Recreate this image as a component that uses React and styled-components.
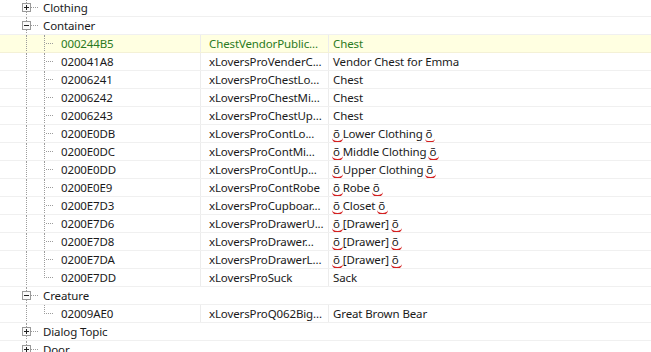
import React from "react";
import styled, { createGlobalStyle } from "styled-components";

const GlobalStyle = createGlobalStyle`
  html, body {
    margin: 0;
    padding: 0;
    background: #ffffff;
  }
  body {
    font-family: "Segoe UI", "Noto Sans", "Liberation Sans", sans-serif;
    font-size: 11.5px;
    letter-spacing: -0.12px;
    color: #1a1a1a;
    overflow: hidden;
  }
`;

// tree data: kind = group | item
const rows = [
  { kind: "group", label: "Clothing", open: false },
  { kind: "group", label: "Container", open: true },
  { kind: "item", id: "000244B5", edid: "ChestVendorPublic...", name: "Chest", selected: true },
  { kind: "item", id: "020041A8", edid: "xLoversProVenderC...", name: "Vendor Chest for Emma" },
  { kind: "item", id: "02006241", edid: "xLoversProChestLo...", name: "Chest" },
  { kind: "item", id: "02006242", edid: "xLoversProChestMi...", name: "Chest" },
  { kind: "item", id: "02006243", edid: "xLoversProChestUp...", name: "Chest" },
  { kind: "item", id: "0200E0DB", edid: "xLoversProContLo...", name: "Lower Clothing", odd: true },
  { kind: "item", id: "0200E0DC", edid: "xLoversProContMi...", name: "Middle Clothing", odd: true },
  { kind: "item", id: "0200E0DD", edid: "xLoversProContUp...", name: "Upper Clothing", odd: true },
  { kind: "item", id: "0200E0E9", edid: "xLoversProContRobe", name: "Robe", odd: true },
  { kind: "item", id: "0200E7D3", edid: "xLoversProCupboar...", name: "Closet", odd: true },
  { kind: "item", id: "0200E7D6", edid: "xLoversProDrawerU...", name: "[Drawer]", odd: true },
  { kind: "item", id: "0200E7D8", edid: "xLoversProDrawer...", name: "[Drawer]", odd: true },
  { kind: "item", id: "0200E7DA", edid: "xLoversProDrawerL...", name: "[Drawer]", odd: true },
  { kind: "item", id: "0200E7DD", edid: "xLoversProSuck", name: "Sack", last: true },
  { kind: "group", label: "Creature", open: true },
  { kind: "item", id: "02009AE0", edid: "xLoversProQ062Big...", name: "Great Brown Bear", last: true },
  { kind: "group", label: "Dialog Topic", open: false },
  { kind: "group", label: "Door", open: false },
];

const Expander = ({ open }) => (
  <ExpanderBox width="9" height="9" viewBox="0 0 9 9">
    <rect x="0.5" y="0.5" width="8" height="8" fill="#fafafa" stroke="#9a9a9a" />
    <line x1="2" y1="4.5" x2="7" y2="4.5" stroke="#222" />
    {!open && <line x1="4.5" y1="2" x2="4.5" y2="7" stroke="#222" />}
  </ExpanderBox>
);

const Odd = ({ children }) => <Squiggle>{children}</Squiggle>;

const App = () => {
  return (
    <>
      <GlobalStyle />
      <Tree>
        {rows.map((r, i) =>
          r.kind === "group" ? (
            <Row key={i}>
              <TreeCell>
                <Guide $line="full" $branch="short">
                  <Expander open={r.open} />
                </Guide>
                <Label>{r.label}</Label>
              </TreeCell>
            </Row>
          ) : (
            <Row key={i} $selected={r.selected}>
              <TreeCell>
                <Guide $line="full" />
                <Guide $line={r.last ? "half" : "full"} $branch="long" />
                <Label $selected={r.selected}>{r.id}</Label>
              </TreeCell>
              <Cell $selected={r.selected} $pad={8}>{r.edid}</Cell>
              <Cell $selected={r.selected} $pad={4}>
                {r.odd ? (
                  <>
                    <Odd>õ</Odd> {r.name} <Odd>õ</Odd>
                  </>
                ) : (
                  r.name
                )}
              </Cell>
            </Row>
          )
        )}
      </Tree>
    </>
  );
};

const Tree = styled.div`
  margin-top: -1px;
  display: flex;
  flex-direction: column;
`;

const Row = styled.div`
  display: grid;
  grid-template-columns: 200px 128px 1fr;
  height: 18px;
  box-sizing: border-box;
  border-bottom: 1px solid ${(p) => (p.$selected ? "#f4f1d6" : "#f0f0f0")};
  background: ${(p) => (p.$selected ? "#ffffe1" : "transparent")};
  line-height: 18px;
  white-space: nowrap;
`;

const TreeCell = styled.div`
  display: flex;
  align-items: stretch;
  padding-left: 17px;
  overflow: hidden;
`;

const Guide = styled.span`
  position: relative;
  flex: 0 0 18px;
  display: flex;
  align-items: center;
  justify-content: flex-start;

  &::before {
    content: "";
    position: absolute;
    left: 9px;
    top: 0;
    height: ${(p) => (p.$line === "half" ? "9px" : p.$line === "full" ? "18px" : "0")};
    border-left: 1px dotted #9c9c9c;
  }

  &::after {
    content: "";
    display: ${(p) => (p.$branch ? "block" : "none")};
    position: absolute;
    top: 8px;
    left: ${(p) => (p.$branch === "short" ? "14px" : "11px")};
    width: 7px;
    border-top: 1px dotted #9c9c9c;
  }
`;

const ExpanderBox = styled.svg`
  position: relative;
  z-index: 1;
  margin-left: 5px;
  margin-top: -1px;
  display: block;
`;

const Label = styled.span`
  margin-left: 8px;
  color: ${(p) => (p.$selected ? "#2a7a22" : "#1a1a1a")};
`;

const Cell = styled.div`
  border-left: 1px solid #ececec;
  padding-left: ${(p) => p.$pad}px;
  overflow: hidden;
  color: ${(p) => (p.$selected ? "#2a7a22" : "#1a1a1a")};
`;

const Squiggle = styled.span`
  position: relative;
  display: inline-block;

  &::after {
    content: "";
    position: absolute;
    left: -1px;
    right: -3px;
    bottom: 0px;
    height: 3px;
    border-bottom: 2px solid #d42020;
    border-radius: 0 0 50% 50% / 0 0 100% 100%;
  }
`;

export default App;
